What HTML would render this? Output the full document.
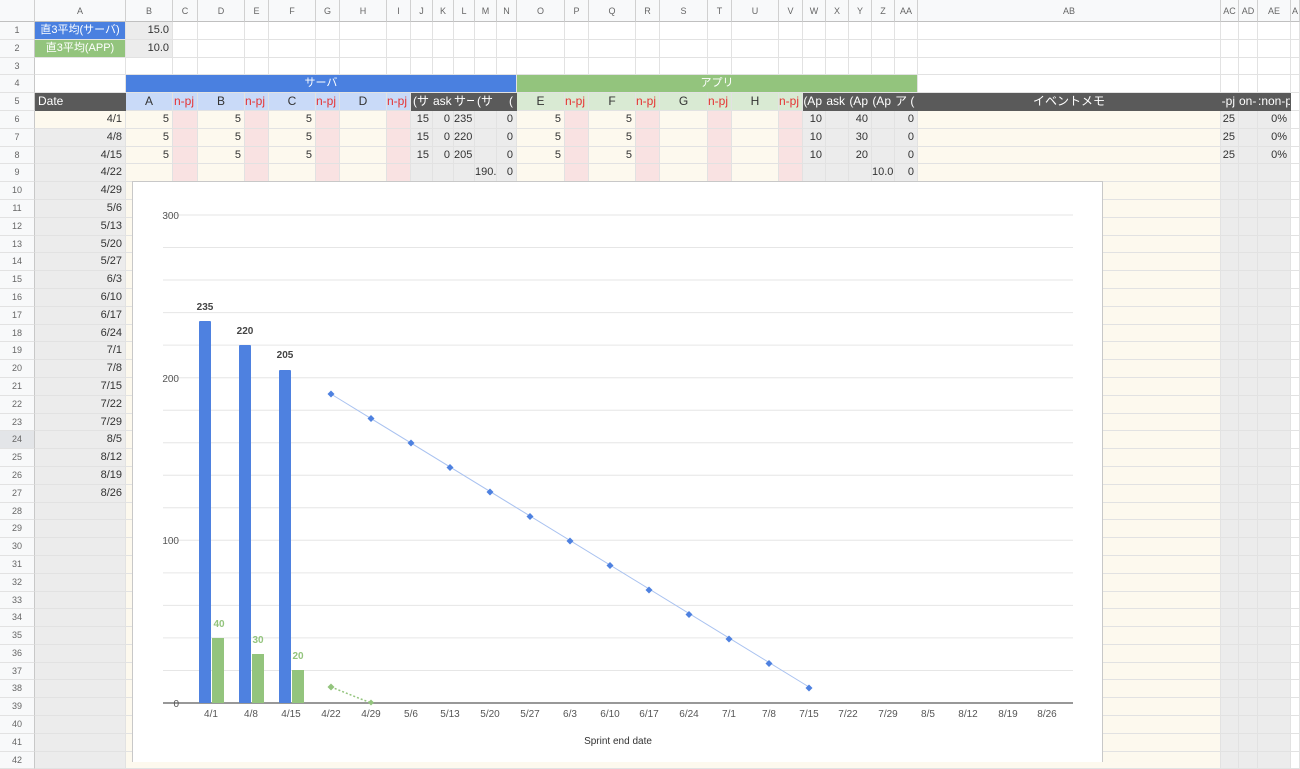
<!DOCTYPE html>
<html><head><meta charset="utf-8"><style>
*{box-sizing:border-box;margin:0;padding:0}
body{width:1300px;height:762px;overflow:hidden;background:#fff;font-family:"Liberation Sans","Noto Sans CJK JP",sans-serif;font-size:11px;color:#333;position:relative}
.r{display:flex;height:17.8px;line-height:17px}
.r>div{border-right:1px solid #e2e2e2;border-bottom:1px solid #e2e2e2;overflow:hidden;white-space:nowrap;text-align:right;padding-right:3px;flex:none}
.r>div:nth-child(1){width:35px;background:#f8f9fa;color:#666;font-size:9px;text-align:center;padding:0;border-right:1px solid #c8c8c8}
.r>div:nth-child(2){width:91px}.r>div:nth-child(3){width:47px}.r>div:nth-child(4){width:25px}.r>div:nth-child(5){width:47px}.r>div:nth-child(6){width:24px}.r>div:nth-child(7){width:47px}.r>div:nth-child(8){width:24px}.r>div:nth-child(9){width:47px}.r>div:nth-child(10){width:24px}.r>div:nth-child(11){width:22px}.r>div:nth-child(12){width:21px}.r>div:nth-child(13){width:21px}.r>div:nth-child(14){width:22px}.r>div:nth-child(15){width:20px}.r>div:nth-child(16){width:48px}.r>div:nth-child(17){width:24px}.r>div:nth-child(18){width:47px}.r>div:nth-child(19){width:24px}.r>div:nth-child(20){width:48px}.r>div:nth-child(21){width:24px}.r>div:nth-child(22){width:47px}.r>div:nth-child(23){width:24px}.r>div:nth-child(24){width:23px}.r>div:nth-child(25){width:23px}.r>div:nth-child(26){width:23px}.r>div:nth-child(27){width:23px}.r>div:nth-child(28){width:23px}.r>div:nth-child(29){width:303px}.r>div:nth-child(30){width:18px}.r>div:nth-child(31){width:19px}.r>div:nth-child(32){width:33px}.r>div:nth-child(33){width:9px}
.h{height:22px;line-height:22px}
.h>div{background:#f8f9fa;color:#666;font-size:9px;text-align:center!important;padding:0!important;border-right:1px solid #d0d0d0!important;border-bottom:1px solid #c0c0c0!important}
.y{background:#fdf9ee}.p{background:#f9e2e2}.g{background:#ececec}
.lb{background:#c9daf8}.lg{background:#d9ead3}.dk{background:#5a5a5a;color:#fff;border-color:#5a5a5a!important}
.c{text-align:center!important;padding:0!important}.rd{color:#e53333;font-size:12px}
.big>div{font-size:12px}
.bl{background:#4a80e0;color:#fff}.gr{background:#93c47d;color:#fff}
.w{width:auto!important}
</style></head><body>
<div class="r h"><div></div><div>A</div><div>B</div><div>C</div><div>D</div><div>E</div><div>F</div><div>G</div><div>H</div><div>I</div><div>J</div><div>K</div><div>L</div><div>M</div><div>N</div><div>O</div><div>P</div><div>Q</div><div>R</div><div>S</div><div>T</div><div>U</div><div>V</div><div>W</div><div>X</div><div>Y</div><div>Z</div><div>AA</div><div>AB</div><div>AC</div><div>AD</div><div>AE</div><div>A</div></div>
<div class="r"><div>1</div><div class="bl c">直3平均(サーバ)</div><div class="g">15.0</div><div></div><div></div><div></div><div></div><div></div><div></div><div></div><div></div><div></div><div></div><div></div><div></div><div></div><div></div><div></div><div></div><div></div><div></div><div></div><div></div><div></div><div></div><div></div><div></div><div></div><div></div><div></div><div></div><div></div><div></div></div>
<div class="r"><div>2</div><div class="gr c">直3平均(APP)</div><div class="g">10.0</div><div></div><div></div><div></div><div></div><div></div><div></div><div></div><div></div><div></div><div></div><div></div><div></div><div></div><div></div><div></div><div></div><div></div><div></div><div></div><div></div><div></div><div></div><div></div><div></div><div></div><div></div><div></div><div></div><div></div><div></div></div>
<div class="r"><div>3</div><div></div><div></div><div></div><div></div><div></div><div></div><div></div><div></div><div></div><div></div><div></div><div></div><div></div><div></div><div></div><div></div><div></div><div></div><div></div><div></div><div></div><div></div><div></div><div></div><div></div><div></div><div></div><div></div><div></div><div></div><div></div><div></div></div>
<div class="r"><div>4</div><div></div><div class="bl c" style="width:391px!important">サーバ</div><div class="gr c" style="width:401px!important">アプリ</div><div style="width:303px!important"></div><div style="width:18px!important"></div><div style="width:19px!important"></div><div style="width:33px!important"></div><div style="width:9px!important"></div></div>
<div class="r big"><div style="font-size:9px">5</div><div class="dk" style="text-align:left;padding-left:3px">Date</div><div class="lb c">A</div><div class="lb rd">n-pj</div><div class="lb c">B</div><div class="lb rd">n-pj</div><div class="lb c">C</div><div class="lb rd">n-pj</div><div class="lb c">D</div><div class="lb rd">n-pj</div><div class="dk">(サ</div><div class="dk">ask</div><div class="dk">サー</div><div class="dk">(サ</div><div class="dk">(</div><div class="lg c">E</div><div class="lg rd">n-pj</div><div class="lg c">F</div><div class="lg rd">n-pj</div><div class="lg c">G</div><div class="lg rd">n-pj</div><div class="lg c">H</div><div class="lg rd">n-pj</div><div class="dk">(Ap</div><div class="dk">ask</div><div class="dk">(Ap</div><div class="dk">(Ap</div><div class="dk">ア (</div><div class="dk c">イベントメモ</div><div class="dk">-pj</div><div class="dk">on-</div><div class="dk">:non-p</div><div></div></div>
<div class="r"><div>6</div><div class="y">4/1</div><div class="y">5</div><div class="p"></div><div class="y">5</div><div class="p"></div><div class="y">5</div><div class="p"></div><div class="y"></div><div class="p"></div><div class="g">15</div><div class="g">0</div><div class="g">235</div><div class="g"></div><div class="g">0</div><div class="y">5</div><div class="p"></div><div class="y">5</div><div class="p"></div><div class="y"></div><div class="p"></div><div class="y"></div><div class="p"></div><div class="g">10</div><div class="g"></div><div class="g">40</div><div class="g"></div><div class="g">0</div><div class="y"></div><div class="g">25</div><div class="g"></div><div class="g">0%</div><div></div></div>
<div class="r"><div>7</div><div class="g">4/8</div><div class="y">5</div><div class="p"></div><div class="y">5</div><div class="p"></div><div class="y">5</div><div class="p"></div><div class="y"></div><div class="p"></div><div class="g">15</div><div class="g">0</div><div class="g">220</div><div class="g"></div><div class="g">0</div><div class="y">5</div><div class="p"></div><div class="y">5</div><div class="p"></div><div class="y"></div><div class="p"></div><div class="y"></div><div class="p"></div><div class="g">10</div><div class="g"></div><div class="g">30</div><div class="g"></div><div class="g">0</div><div class="y"></div><div class="g">25</div><div class="g"></div><div class="g">0%</div><div></div></div>
<div class="r"><div>8</div><div class="g">4/15</div><div class="y">5</div><div class="p"></div><div class="y">5</div><div class="p"></div><div class="y">5</div><div class="p"></div><div class="y"></div><div class="p"></div><div class="g">15</div><div class="g">0</div><div class="g">205</div><div class="g"></div><div class="g">0</div><div class="y">5</div><div class="p"></div><div class="y">5</div><div class="p"></div><div class="y"></div><div class="p"></div><div class="y"></div><div class="p"></div><div class="g">10</div><div class="g"></div><div class="g">20</div><div class="g"></div><div class="g">0</div><div class="y"></div><div class="g">25</div><div class="g"></div><div class="g">0%</div><div></div></div>
<div class="r"><div>9</div><div class="g">4/22</div><div class="y"></div><div class="p"></div><div class="y"></div><div class="p"></div><div class="y"></div><div class="p"></div><div class="y"></div><div class="p"></div><div class="g"></div><div class="g"></div><div class="g"></div><div class="g">190.</div><div class="g">0</div><div class="y"></div><div class="p"></div><div class="y"></div><div class="p"></div><div class="y"></div><div class="p"></div><div class="y"></div><div class="p"></div><div class="g"></div><div class="g"></div><div class="g"></div><div class="g">10.0</div><div class="g">0</div><div class="y"></div><div class="g"></div><div class="g"></div><div class="g"></div><div></div></div>
<div class="r"><div>10</div><div class="g">4/29</div><div class="y" style="width:1095px!important"></div><div class="g" style="width:18px!important"></div><div class="g" style="width:19px!important"></div><div class="g" style="width:33px!important"></div><div style="width:9px!important"></div></div>
<div class="r"><div>11</div><div class="g">5/6</div><div class="y" style="width:1095px!important"></div><div class="g" style="width:18px!important"></div><div class="g" style="width:19px!important"></div><div class="g" style="width:33px!important"></div><div style="width:9px!important"></div></div>
<div class="r"><div>12</div><div class="g">5/13</div><div class="y" style="width:1095px!important"></div><div class="g" style="width:18px!important"></div><div class="g" style="width:19px!important"></div><div class="g" style="width:33px!important"></div><div style="width:9px!important"></div></div>
<div class="r"><div>13</div><div class="g">5/20</div><div class="y" style="width:1095px!important"></div><div class="g" style="width:18px!important"></div><div class="g" style="width:19px!important"></div><div class="g" style="width:33px!important"></div><div style="width:9px!important"></div></div>
<div class="r"><div>14</div><div class="g">5/27</div><div class="y" style="width:1095px!important"></div><div class="g" style="width:18px!important"></div><div class="g" style="width:19px!important"></div><div class="g" style="width:33px!important"></div><div style="width:9px!important"></div></div>
<div class="r"><div>15</div><div class="g">6/3</div><div class="y" style="width:1095px!important"></div><div class="g" style="width:18px!important"></div><div class="g" style="width:19px!important"></div><div class="g" style="width:33px!important"></div><div style="width:9px!important"></div></div>
<div class="r"><div>16</div><div class="g">6/10</div><div class="y" style="width:1095px!important"></div><div class="g" style="width:18px!important"></div><div class="g" style="width:19px!important"></div><div class="g" style="width:33px!important"></div><div style="width:9px!important"></div></div>
<div class="r"><div>17</div><div class="g">6/17</div><div class="y" style="width:1095px!important"></div><div class="g" style="width:18px!important"></div><div class="g" style="width:19px!important"></div><div class="g" style="width:33px!important"></div><div style="width:9px!important"></div></div>
<div class="r"><div>18</div><div class="g">6/24</div><div class="y" style="width:1095px!important"></div><div class="g" style="width:18px!important"></div><div class="g" style="width:19px!important"></div><div class="g" style="width:33px!important"></div><div style="width:9px!important"></div></div>
<div class="r"><div>19</div><div class="g">7/1</div><div class="y" style="width:1095px!important"></div><div class="g" style="width:18px!important"></div><div class="g" style="width:19px!important"></div><div class="g" style="width:33px!important"></div><div style="width:9px!important"></div></div>
<div class="r"><div>20</div><div class="g">7/8</div><div class="y" style="width:1095px!important"></div><div class="g" style="width:18px!important"></div><div class="g" style="width:19px!important"></div><div class="g" style="width:33px!important"></div><div style="width:9px!important"></div></div>
<div class="r"><div>21</div><div class="g">7/15</div><div class="y" style="width:1095px!important"></div><div class="g" style="width:18px!important"></div><div class="g" style="width:19px!important"></div><div class="g" style="width:33px!important"></div><div style="width:9px!important"></div></div>
<div class="r"><div>22</div><div class="g">7/22</div><div class="y" style="width:1095px!important"></div><div class="g" style="width:18px!important"></div><div class="g" style="width:19px!important"></div><div class="g" style="width:33px!important"></div><div style="width:9px!important"></div></div>
<div class="r"><div>23</div><div class="g">7/29</div><div class="y" style="width:1095px!important"></div><div class="g" style="width:18px!important"></div><div class="g" style="width:19px!important"></div><div class="g" style="width:33px!important"></div><div style="width:9px!important"></div></div>
<div class="r"><div style="background:#e3e5e8">24</div><div class="g">8/5</div><div class="y" style="width:1095px!important"></div><div class="g" style="width:18px!important"></div><div class="g" style="width:19px!important"></div><div class="g" style="width:33px!important"></div><div style="width:9px!important"></div></div>
<div class="r"><div>25</div><div class="g">8/12</div><div class="y" style="width:1095px!important"></div><div class="g" style="width:18px!important"></div><div class="g" style="width:19px!important"></div><div class="g" style="width:33px!important"></div><div style="width:9px!important"></div></div>
<div class="r"><div>26</div><div class="g">8/19</div><div class="y" style="width:1095px!important"></div><div class="g" style="width:18px!important"></div><div class="g" style="width:19px!important"></div><div class="g" style="width:33px!important"></div><div style="width:9px!important"></div></div>
<div class="r"><div>27</div><div class="g">8/26</div><div class="y" style="width:1095px!important"></div><div class="g" style="width:18px!important"></div><div class="g" style="width:19px!important"></div><div class="g" style="width:33px!important"></div><div style="width:9px!important"></div></div>
<div class="r"><div>28</div><div class="g"></div><div class="y" style="width:1095px!important"></div><div class="g" style="width:18px!important"></div><div class="g" style="width:19px!important"></div><div class="g" style="width:33px!important"></div><div style="width:9px!important"></div></div>
<div class="r"><div>29</div><div class="g"></div><div class="y" style="width:1095px!important"></div><div class="g" style="width:18px!important"></div><div class="g" style="width:19px!important"></div><div class="g" style="width:33px!important"></div><div style="width:9px!important"></div></div>
<div class="r"><div>30</div><div class="g"></div><div class="y" style="width:1095px!important"></div><div class="g" style="width:18px!important"></div><div class="g" style="width:19px!important"></div><div class="g" style="width:33px!important"></div><div style="width:9px!important"></div></div>
<div class="r"><div>31</div><div class="g"></div><div class="y" style="width:1095px!important"></div><div class="g" style="width:18px!important"></div><div class="g" style="width:19px!important"></div><div class="g" style="width:33px!important"></div><div style="width:9px!important"></div></div>
<div class="r"><div>32</div><div class="g"></div><div class="y" style="width:1095px!important"></div><div class="g" style="width:18px!important"></div><div class="g" style="width:19px!important"></div><div class="g" style="width:33px!important"></div><div style="width:9px!important"></div></div>
<div class="r"><div>33</div><div class="g"></div><div class="y" style="width:1095px!important"></div><div class="g" style="width:18px!important"></div><div class="g" style="width:19px!important"></div><div class="g" style="width:33px!important"></div><div style="width:9px!important"></div></div>
<div class="r"><div>34</div><div class="g"></div><div class="y" style="width:1095px!important"></div><div class="g" style="width:18px!important"></div><div class="g" style="width:19px!important"></div><div class="g" style="width:33px!important"></div><div style="width:9px!important"></div></div>
<div class="r"><div>35</div><div class="g"></div><div class="y" style="width:1095px!important"></div><div class="g" style="width:18px!important"></div><div class="g" style="width:19px!important"></div><div class="g" style="width:33px!important"></div><div style="width:9px!important"></div></div>
<div class="r"><div>36</div><div class="g"></div><div class="y" style="width:1095px!important"></div><div class="g" style="width:18px!important"></div><div class="g" style="width:19px!important"></div><div class="g" style="width:33px!important"></div><div style="width:9px!important"></div></div>
<div class="r"><div>37</div><div class="g"></div><div class="y" style="width:1095px!important"></div><div class="g" style="width:18px!important"></div><div class="g" style="width:19px!important"></div><div class="g" style="width:33px!important"></div><div style="width:9px!important"></div></div>
<div class="r"><div>38</div><div class="g"></div><div class="y" style="width:1095px!important"></div><div class="g" style="width:18px!important"></div><div class="g" style="width:19px!important"></div><div class="g" style="width:33px!important"></div><div style="width:9px!important"></div></div>
<div class="r"><div>39</div><div class="g"></div><div class="y" style="width:1095px!important"></div><div class="g" style="width:18px!important"></div><div class="g" style="width:19px!important"></div><div class="g" style="width:33px!important"></div><div style="width:9px!important"></div></div>
<div class="r"><div>40</div><div class="g"></div><div class="y" style="width:1095px!important"></div><div class="g" style="width:18px!important"></div><div class="g" style="width:19px!important"></div><div class="g" style="width:33px!important"></div><div style="width:9px!important"></div></div>
<div class="r"><div>41</div><div class="g"></div><div class="y" style="width:1095px!important"></div><div class="g" style="width:18px!important"></div><div class="g" style="width:19px!important"></div><div class="g" style="width:33px!important"></div><div style="width:9px!important"></div></div>
<div class="r"><div>42</div><div class="g"></div><div class="y" style="width:1095px!important"></div><div class="g" style="width:18px!important"></div><div class="g" style="width:19px!important"></div><div class="g" style="width:33px!important"></div><div style="width:9px!important"></div></div>

<svg style="position:absolute;left:0;top:0" width="1300" height="762" font-family="Liberation Sans, sans-serif">
<rect x="132.5" y="181.5" width="970" height="600" fill="#fff" stroke="#c8c8c8"/>
<g stroke="#e6e6e6" stroke-width="1">
<line x1="163" x2="1073" y1="215" y2="215"/><line x1="163" x2="1073" y1="247.5" y2="247.5"/><line x1="163" x2="1073" y1="280" y2="280"/><line x1="163" x2="1073" y1="312.6" y2="312.6"/><line x1="163" x2="1073" y1="345.1" y2="345.1"/><line x1="163" x2="1073" y1="377.7" y2="377.7"/><line x1="163" x2="1073" y1="410.2" y2="410.2"/><line x1="163" x2="1073" y1="442.7" y2="442.7"/><line x1="163" x2="1073" y1="475.3" y2="475.3"/><line x1="163" x2="1073" y1="507.8" y2="507.8"/><line x1="163" x2="1073" y1="540.3" y2="540.3"/><line x1="163" x2="1073" y1="572.9" y2="572.9"/><line x1="163" x2="1073" y1="605.4" y2="605.4"/><line x1="163" x2="1073" y1="637.9" y2="637.9"/><line x1="163" x2="1073" y1="670.5" y2="670.5"/>
</g>
<line x1="163" x2="1073" y1="703" y2="703" stroke="#777" stroke-width="1.5"/>
<g font-size="10" fill="#555" text-anchor="end"><text x="179" y="219">300</text><text x="179" y="382">200</text><text x="179" y="544">100</text><text x="179" y="707">0</text></g>
<g fill="#4e81e0"><rect x="199" y="321" width="12" height="382" rx="1"/><rect x="239" y="345" width="12" height="358" rx="1"/><rect x="279" y="370" width="12" height="333" rx="1"/></g>
<g fill="#93c47d"><rect x="212" y="638" width="12" height="65"/><rect x="252" y="654" width="12" height="49"/><rect x="292" y="670" width="12" height="33"/></g>
<g font-size="10" font-weight="bold" fill="#444" text-anchor="middle"><text x="205" y="310">235</text><text x="245" y="334">220</text><text x="285" y="358">205</text></g>
<g font-size="10" font-weight="bold" fill="#93c47d" text-anchor="middle"><text x="219" y="627">40</text><text x="258" y="643">30</text><text x="298" y="659">20</text></g>
<line x1="331" y1="394" x2="809" y2="687" stroke="#a9c2f0" stroke-width="1"/>
<line x1="331" y1="687" x2="371" y2="703" stroke="#93c47d" stroke-width="1.5" stroke-dasharray="2,2"/>
<g fill="#4e81e0">
<path d="M331 390.5l3.5 3.5-3.5 3.5-3.5-3.5z"/><path d="M371 415l3.5 3.5-3.5 3.5-3.5-3.5z"/><path d="M411 439.5l3.5 3.5-3.5 3.5-3.5-3.5z"/><path d="M450 464l3.5 3.5-3.5 3.5-3.5-3.5z"/><path d="M490 488.5l3.5 3.5-3.5 3.5-3.5-3.5z"/><path d="M530 513l3.5 3.5-3.5 3.5-3.5-3.5z"/><path d="M570 537.5l3.5 3.5-3.5 3.5-3.5-3.5z"/><path d="M610 562l3.5 3.5-3.5 3.5-3.5-3.5z"/><path d="M649 586.5l3.5 3.5-3.5 3.5-3.5-3.5z"/><path d="M689 611l3.5 3.5-3.5 3.5-3.5-3.5z"/><path d="M729 635.5l3.5 3.5-3.5 3.5-3.5-3.5z"/><path d="M769 660l3.5 3.5-3.5 3.5-3.5-3.5z"/><path d="M809 684.5l3.5 3.5-3.5 3.5-3.5-3.5z"/>
</g>
<g fill="#93c47d"><path d="M331 683.5l3.5 3.5-3.5 3.5-3.5-3.5z"/><path d="M371 699.5l3 3-3 3-3-3z"/></g>
<g font-size="10" fill="#555" text-anchor="middle">
<text x="211" y="717">4/1</text><text x="251" y="717">4/8</text><text x="291" y="717">4/15</text><text x="331" y="717">4/22</text><text x="371" y="717">4/29</text><text x="411" y="717">5/6</text><text x="450" y="717">5/13</text><text x="490" y="717">5/20</text><text x="530" y="717">5/27</text><text x="570" y="717">6/3</text><text x="610" y="717">6/10</text><text x="649" y="717">6/17</text><text x="689" y="717">6/24</text><text x="729" y="717">7/1</text><text x="769" y="717">7/8</text><text x="809" y="717">7/15</text><text x="848" y="717">7/22</text><text x="888" y="717">7/29</text><text x="928" y="717">8/5</text><text x="968" y="717">8/12</text><text x="1008" y="717">8/19</text><text x="1047" y="717">8/26</text>
<text x="618" y="744" fill="#333">Sprint end date</text>
</g>
</svg>
</body></html>
